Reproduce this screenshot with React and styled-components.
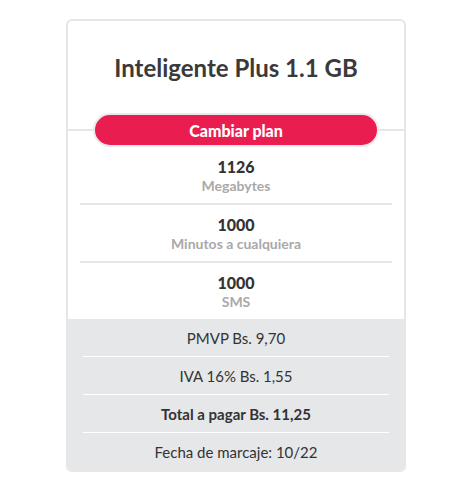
import React from 'react';
import styled, { createGlobalStyle } from 'styled-components';

const GlobalStyle = createGlobalStyle`
  body {
    margin: 0;
    background: #ffffff;
    font-family: Lato, "Open Sans", Arial, sans-serif;
    color: #333333;
  }
`;

const Page = styled.div`
  padding: 19px 0 0 66px;
`;

const Card = styled.div`
  width: 340px;
  box-sizing: border-box;
  border: 2px solid #e6e6e6;
  border-radius: 6px;
  overflow: hidden;
  background: #fff;
`;

const Title = styled.h2`
  margin: 0;
  padding: 32px 0 30px;
  font-size: 24px;
  line-height: 30px;
  font-weight: 700;
  text-align: center;
  color: #3a3a3a;
`;

const ButtonRow = styled.div`
  display: flex;
  align-items: center;
`;

const Rule = styled.div`
  flex: 1;
  height: 2px;
  background: #e6e6e6;
`;

const ChangeButton = styled.button`
  width: 286px;
  height: 34px;
  box-sizing: border-box;
  border: 2px solid #e9e9e9;
  border-radius: 17px;
  background: #ea1d50;
  color: #fff;
  font-family: inherit;
  font-size: 16px;
  font-weight: 900;
  cursor: pointer;
`;

const Features = styled.div`
  padding: 0 12px;
`;

const Feature = styled.div`
  padding: 10px 0 8px;
  text-align: center;
  border-bottom: ${p => (p.last ? 'none' : '2px solid #e6e6e6')};
`;

const Amount = styled.div`
  font-size: 16px;
  line-height: 20px;
  font-weight: 900;
  color: #333;
`;

const Unit = styled.div`
  font-size: 14px;
  line-height: 18px;
  font-weight: 700;
  color: #a9a9a9;
`;

const Footer = styled.div`
  background: #e6e7e9;
  padding: 0 15px;
`;

const FooterRow = styled.div`
  height: 37px;
  display: flex;
  align-items: center;
  justify-content: center;
  font-size: 15px;
  font-weight: ${p => (p.bold ? 700 : 400)};
  color: #333;
  border-bottom: ${p => (p.last ? 'none' : '1px solid #ffffff')};
`;

const features = [
  { amount: '1126', unit: 'Megabytes' },
  { amount: '1000', unit: 'Minutos a cualquiera' },
  { amount: '1000', unit: 'SMS' },
];

const prices = [
  { text: 'PMVP Bs. 9,70' },
  { text: 'IVA 16% Bs. 1,55' },
  { text: 'Total a pagar Bs. 11,25', bold: true },
  { text: 'Fecha de marcaje: 10/22' },
];

const App = () => (
  <>
    <GlobalStyle />
    <Page>
      <Card>
        <Title>Inteligente Plus 1.1 GB</Title>
        <ButtonRow>
          <Rule />
          <ChangeButton>Cambiar plan</ChangeButton>
          <Rule />
        </ButtonRow>
        <Features>
          {features.map((f, i) => (
            <Feature key={i} last={i === features.length - 1}>
              <Amount>{f.amount}</Amount>
              <Unit>{f.unit}</Unit>
            </Feature>
          ))}
        </Features>
        <Footer>
          {prices.map((p, i) => (
            <FooterRow key={i} bold={p.bold} last={i === prices.length - 1}>
              {p.text}
            </FooterRow>
          ))}
        </Footer>
      </Card>
    </Page>
  </>
);

export default App;
